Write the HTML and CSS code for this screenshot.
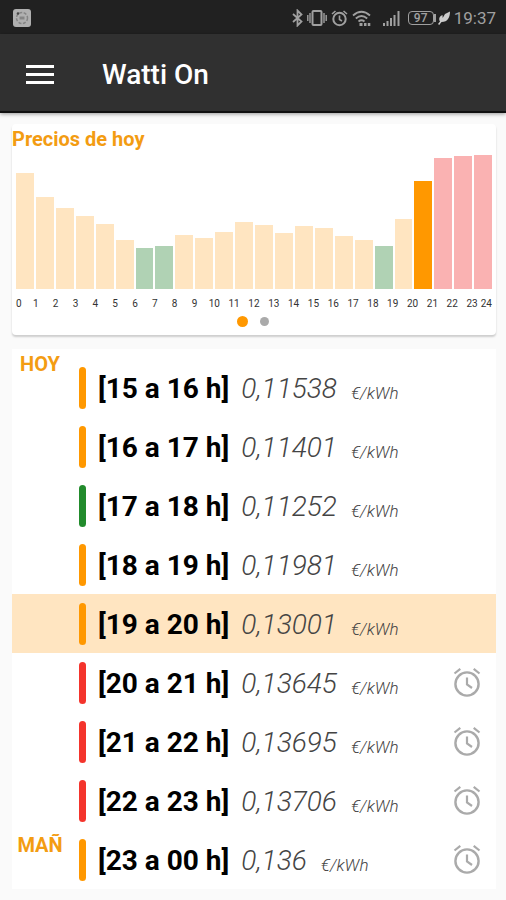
FILE: index.html
```html
<!DOCTYPE html>
<html lang="es">
<head>
    <meta charset="UTF-8">
    <meta name="viewport" content="width=device-width, initial-scale=1.0">
    <title>Watti On</title>
    <link rel="stylesheet" href="styles.css">
</head>
<body>
    <!-- Shared icons -->
    <svg class="sprite" aria-hidden="true">
        <symbol id="alarm" viewBox="0 0 28 30">
            <circle cx="14" cy="17" r="11.6" fill="none" stroke="currentColor" stroke-width="2.4"/>
            <path d="M14 10.5v7l5 3.5M1.5 6.5l5.8-4.6M26.5 6.5l-5.8-4.6" fill="none" stroke="currentColor" stroke-width="2.2"/>
        </symbol>
        <symbol id="alarm-small" viewBox="0 0 17 18">
            <circle cx="8.5" cy="10" r="6.2" fill="none" stroke="currentColor" stroke-width="2"/>
            <path d="M8.5 6.5v4l2.5 1.5M1 5l3.5-3M16 5l-3.5-3" fill="none" stroke="currentColor" stroke-width="1.6"/>
        </symbol>
    </svg>

    <!-- Status Bar -->
    <div class="status-bar">
        <svg class="app-icon" viewBox="0 0 18 18" aria-hidden="true">
            <rect width="18" height="18" rx="3" fill="#b0b0b0"/>
            <circle cx="9" cy="9" r="5.5" fill="none" stroke="#858585" stroke-width="1.5" stroke-dasharray="3 1.5"/>
            <rect x="6.5" y="7.5" width="5" height="3" fill="#858585"/>
            <circle cx="5" cy="4.5" r="1.3" fill="#444"/>
        </svg>
        <div class="status-icons">
            <svg width="11" height="18" viewBox="0 0 11 18" aria-hidden="true">
                <path d="M1 5l8.5 7.5-4 4v-15l4 4L1 13" fill="none" stroke="currentColor" stroke-width="1.8"/>
            </svg>
            <svg width="20" height="18" viewBox="0 0 20 18" aria-hidden="true">
                <rect x="5.5" y="2" width="9" height="14" rx="1" fill="none" stroke="currentColor" stroke-width="2"/>
                <path d="M3 4v10M17 4v10M.8 6v6M19.2 6v6" stroke="currentColor" stroke-width="1.4"/>
            </svg>
            <svg width="17" height="18" aria-hidden="true"><use href="#alarm-small"/></svg>
            <svg class="wifi" width="19" height="18" viewBox="0 0 19 18" aria-hidden="true">
                <path d="M1 6.5Q9.5-1 18 6.5M3.8 9.5q5.7-5 11.4 0M6.5 12.5q3-2.5 6 0" fill="none" stroke="currentColor" stroke-width="1.8"/>
                <path d="M7.5 14h3v3h-3zM12 14h2.5v3H12zM15.8 14h2.5v3h-2.5z" fill="currentColor"/>
            </svg>
            <svg width="17" height="18" viewBox="0 0 17 18" aria-hidden="true">
                <path d="M0 14h2v3H0zM3.5 12h2v5h-2zM7 9h2v8H7zM10.5 6h2v11h-2zM14.5 2h2v15h-2z" fill="currentColor"/>
            </svg>
            <span class="battery">97</span>
            <svg width="12" height="14" viewBox="0 0 12 14" aria-hidden="true">
                <path d="M0 13l2-2.5C.2 7.5 1.8 5 4.5 4l.2 3L7 3l5-2.5c0 5.5-2 10.5-8.5 10.5L1.2 14z" fill="#ccc"/>
            </svg>
            <time>19:37</time>
        </div>
    </div>

    <!-- App Bar -->
    <header>
        <button class="menu-button" type="button" aria-label="Menú">
            <span></span>
            <span></span>
            <span></span>
        </button>
        <h1>Watti On</h1>
    </header>

    <main>
        <!-- Chart -->
        <section class="chart-card">
            <h2>Precios de hoy</h2>
            <div class="chart">
                <div class="bar" style="height: 116px"></div>
                <div class="bar" style="height: 92px"></div>
                <div class="bar" style="height: 81px"></div>
                <div class="bar" style="height: 73px"></div>
                <div class="bar" style="height: 65px"></div>
                <div class="bar" style="height: 49px"></div>
                <div class="bar low" style="height: 41px"></div>
                <div class="bar low" style="height: 43px"></div>
                <div class="bar" style="height: 54px"></div>
                <div class="bar" style="height: 51px"></div>
                <div class="bar" style="height: 57px"></div>
                <div class="bar" style="height: 67px"></div>
                <div class="bar" style="height: 64px"></div>
                <div class="bar" style="height: 56px"></div>
                <div class="bar" style="height: 63px"></div>
                <div class="bar" style="height: 61px"></div>
                <div class="bar" style="height: 53px"></div>
                <div class="bar" style="height: 49px"></div>
                <div class="bar low" style="height: 43px"></div>
                <div class="bar" style="height: 70px"></div>
                <div class="bar current" style="height: 108px"></div>
                <div class="bar high" style="height: 131px"></div>
                <div class="bar high" style="height: 133px"></div>
                <div class="bar high" style="height: 134px"></div>
            </div>
            <div class="hours">
                <span>0</span><span>1</span><span>2</span><span>3</span><span>4</span>
                <span>5</span><span>6</span><span>7</span><span>8</span><span>9</span>
                <span>10</span><span>11</span><span>12</span><span>13</span><span>14</span>
                <span>15</span><span>16</span><span>17</span><span>18</span><span>19</span>
                <span>20</span><span>21</span><span>22</span><span>23</span><span>24</span>
            </div>
            <div class="pager">
                <button class="dot active" type="button" aria-label="Hoy"></button>
                <button class="dot" type="button" aria-label="Mañana"></button>
            </div>
        </section>

        <!-- Price List -->
        <ul class="price-list">
            <li class="row">
                <span class="day">HOY</span>
                <span class="level"></span>
                <strong>[15 a 16 h]</strong>
                <span class="price">0,11538</span>
                <span class="unit">€/kWh</span>
            </li>
            <li class="row">
                <span class="day"></span>
                <span class="level"></span>
                <strong>[16 a 17 h]</strong>
                <span class="price">0,11401</span>
                <span class="unit">€/kWh</span>
            </li>
            <li class="row">
                <span class="day"></span>
                <span class="level low"></span>
                <strong>[17 a 18 h]</strong>
                <span class="price">0,11252</span>
                <span class="unit">€/kWh</span>
            </li>
            <li class="row">
                <span class="day"></span>
                <span class="level"></span>
                <strong>[18 a 19 h]</strong>
                <span class="price">0,11981</span>
                <span class="unit">€/kWh</span>
            </li>
            <li class="row now">
                <span class="day"></span>
                <span class="level"></span>
                <strong>[19 a 20 h]</strong>
                <span class="price">0,13001</span>
                <span class="unit">€/kWh</span>
            </li>
            <li class="row">
                <span class="day"></span>
                <span class="level high"></span>
                <strong>[20 a 21 h]</strong>
                <span class="price">0,13645</span>
                <span class="unit">€/kWh</span>
                <button class="alarm-button" type="button" aria-label="Alarma 20 h"><svg><use href="#alarm"/></svg></button>
            </li>
            <li class="row">
                <span class="day"></span>
                <span class="level high"></span>
                <strong>[21 a 22 h]</strong>
                <span class="price">0,13695</span>
                <span class="unit">€/kWh</span>
                <button class="alarm-button" type="button" aria-label="Alarma 21 h"><svg><use href="#alarm"/></svg></button>
            </li>
            <li class="row">
                <span class="day"></span>
                <span class="level high"></span>
                <strong>[22 a 23 h]</strong>
                <span class="price">0,13706</span>
                <span class="unit">€/kWh</span>
                <button class="alarm-button" type="button" aria-label="Alarma 22 h"><svg><use href="#alarm"/></svg></button>
            </li>
            <li class="row">
                <span class="day">MAÑ</span>
                <span class="level"></span>
                <strong>[23 a 00 h]</strong>
                <span class="price">0,136</span>
                <span class="unit">€/kWh</span>
                <button class="alarm-button" type="button" aria-label="Alarma 23 h"><svg><use href="#alarm"/></svg></button>
            </li>
        </ul>
    </main>
</body>
</html>
```
FILE: styles.css
```css
/* Global Styles */
* {
    box-sizing: border-box;
}

body {
    margin: 0;
    font-family: Roboto, sans-serif;
    background: #fafafa;
    color: #000;
}

button {
    padding: 0;
    border: 0;
    background: none;
    cursor: pointer;
}

.sprite {
    display: none;
}

/* Status Bar */
.status-bar {
    display: flex;
    justify-content: space-between;
    align-items: center;
    height: 34px;
    padding: 2px 10px 0 13px;
    background: #212121;
    color: #a0a0a0;
}

.app-icon {
    width: 18px;
    height: 18px;
}

.status-icons {
    display: flex;
    align-items: center;
    gap: 4px;
}

.wifi {
    margin-right: 8px;
}

.battery {
    position: relative;
    width: 26px;
    height: 14px;
    margin-left: 4px;
    border: 1px solid #a0a0a0;
    border-radius: 4px;
    font-size: 12px;
    font-weight: 500;
    line-height: 12px;
    text-align: center;
}

/* Battery tip */
.battery::after {
    content: "";
    position: absolute;
    top: 2px;
    right: -3px;
    width: 2px;
    height: 8px;
    background: #a0a0a0;
}

.status-bar time {
    font-size: 17px;
    line-height: 20px;
}

/* App Bar */
header {
    display: flex;
    align-items: center;
    height: 79px;
    padding: 4px 26px 0;
    gap: 48px;
    background: #303030;
    border-bottom: 2px solid #111;
    box-shadow: 0 1px 4px rgba(0, 0, 0, 0.4);
}

.menu-button {
    display: flex;
    flex-direction: column;
    gap: 5px;
    width: 28px;
}

.menu-button span {
    height: 3px;
    background: #fff;
}

header h1 {
    margin: 0;
    font-size: 28px;
    font-weight: 500;
    line-height: 32px;
    color: #fff;
}

main {
    display: flex;
    flex-direction: column;
    gap: 14px;
    padding: 11px 10px 12px 12px;
}

/* Chart */
.chart-card {
    padding-bottom: 6px;
    background: #fff;
    border-radius: 4px;
    box-shadow: 0 2px 2px rgba(0, 0, 0, 0.18);
}

.chart-card h2 {
    margin: 0;
    padding-top: 3px;
    font-size: 20px;
    font-weight: 700;
    line-height: 24px;
    color: #f39c12;
}

.chart {
    display: flex;
    align-items: flex-end;
    gap: 2px;
    height: 138px;
    padding: 0 4px;
}

.bar {
    flex: 1;
    background: #ffe5c1;
}

.bar.low {
    background: #b0d2b4;
}

.bar.high {
    background: #fab2b2;
}

.bar.current {
    background: #ff9800;
}

.hours {
    display: flex;
    padding: 8px 4px 0;
    font-size: 10px;
    line-height: 14px;
    color: #333;
}

.hours span {
    display: flex;
    flex: 2;
    justify-content: center;
    min-width: 0;
}

/* End labels sit inside the axis */
.hours span:first-child {
    flex: 1;
    justify-content: flex-start;
}

.hours span:last-child {
    flex: 1;
    justify-content: flex-end;
}

.pager {
    display: flex;
    justify-content: center;
    align-items: center;
    gap: 12px;
    height: 16px;
    margin-top: 2px;
    padding-right: 2px;
}

.dot {
    width: 9px;
    height: 9px;
    border-radius: 50%;
    background: #aaa;
}

.dot.active {
    width: 11px;
    height: 11px;
    background: #ff9800;
}

/* Price List */
.price-list {
    margin: 0;
    padding: 0;
    list-style: none;
    background: #fff;
}

.row {
    display: flex;
    align-items: center;
    height: 59px;
    padding-right: 15px;
}

.row:first-child {
    height: 68px;
    padding-top: 9px;
}

.row:first-child .day {
    margin-top: -9px;
}

.row.now {
    background: #ffe5c1;
}

.day {
    align-self: flex-start;
    width: 56px;
    margin-right: 11px;
    padding-top: 3px;
    font-size: 20px;
    font-weight: 700;
    line-height: 24px;
    text-align: center;
    color: #f39c12;
}

.level {
    width: 7px;
    height: 42px;
    margin-right: 12px;
    border-radius: 4px;
    background: #ff9800;
}

.level.low {
    background: #228b2c;
}

.level.high {
    background: #f4342c;
}

.row strong,
.price {
    margin-right: 12px;
    padding-top: 3px;
    font-size: 28px;
    font-weight: 700;
    line-height: 36px;
    white-space: nowrap;
}

.price {
    margin-right: 14px;
    font-style: italic;
    font-weight: 300;
    color: #444;
}

.unit {
    padding-top: 11px;
    font-size: 17px;
    font-style: italic;
    font-weight: 300;
    line-height: 20px;
    color: #444;
}

.alarm-button {
    margin-left: auto;
    padding-bottom: 2px;
    color: #aaa;
}

.alarm-button svg {
    display: block;
    width: 28px;
    height: 30px;
}
```
